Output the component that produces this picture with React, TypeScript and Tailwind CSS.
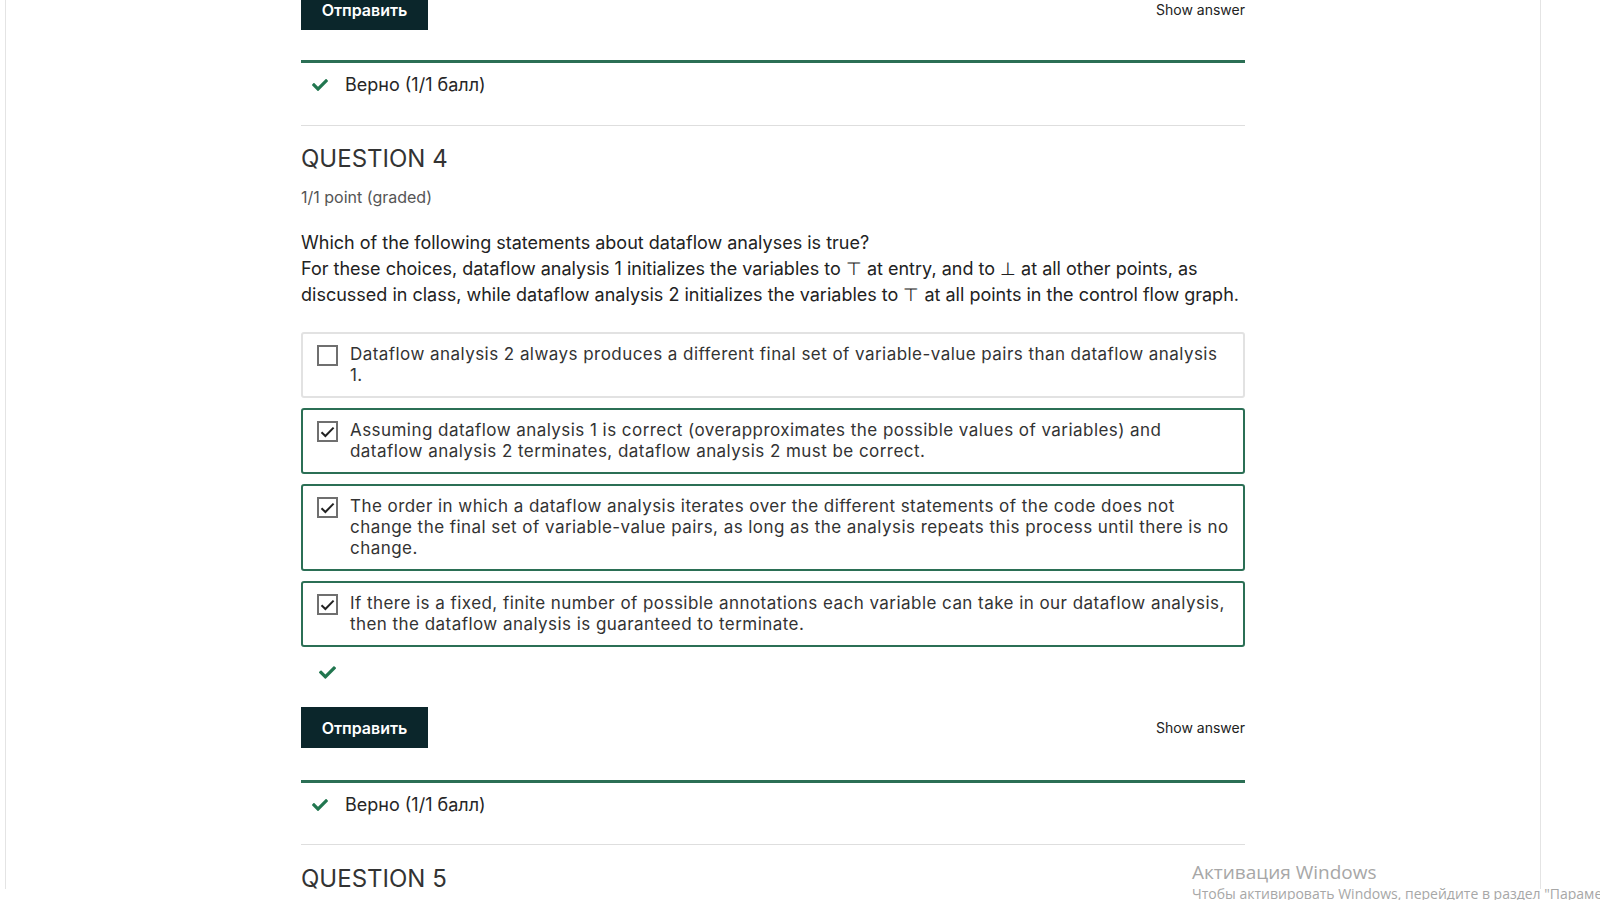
import { FaCheck } from "react-icons/fa";

type Choice = {
  text: string;
  checked: boolean;
};

const choices: Choice[] = [
  {
    text: "Dataflow analysis 2 always produces a different final set of variable-value pairs than dataflow analysis 1.",
    checked: false,
  },
  {
    text: "Assuming dataflow analysis 1 is correct (overapproximates the possible values of variables) and dataflow analysis 2 terminates, dataflow analysis 2 must be correct.",
    checked: true,
  },
  {
    text: "The order in which a dataflow analysis iterates over the different statements of the code does not change the final set of variable-value pairs, as long as the analysis repeats this process until there is no change.",
    checked: true,
  },
  {
    text: "If there is a fixed, finite number of possible annotations each variable can take in our dataflow analysis, then the dataflow analysis is guaranteed to terminate.",
    checked: true,
  },
];

const Checkbox = ({ checked }: { checked: boolean }) => (
  <span className="mt-[1px] flex h-[21px] w-[21px] shrink-0 items-center justify-center border-2 border-[#6f6f6f] bg-white">
    {checked && (
      <svg width="15" height="12" viewBox="0 0 15 12" fill="none">
        <path d="M1.5 6.2 L5.4 10 L13.6 1.6" stroke="#222" strokeWidth="2" />
      </svg>
    )}
  </span>
);

const SubmitRow = ({ className = "" }: { className?: string }) => (
  <div className={`flex items-center justify-between ${className}`}>
    <button className="h-[41px] w-[127px] bg-[#0b262b] text-[16px] font-semibold text-white">
      Отправить
    </button>
    <span className="text-[14px] text-[#222]">Show answer</span>
  </div>
);

const Verdict = () => (
  <div className="border-t-[3px] border-[#2b6f55]">
    <div className="flex items-center gap-[17px] pl-[11px] pt-[8px] text-[18px] text-[#262626]">
      <FaCheck className="text-[#21764f]" size={16} />
      <span>Верно (1/1 балл)</span>
    </div>
  </div>
);

const App = () => {
  return (
    <div className="relative h-[900px] w-[1600px] overflow-hidden bg-white font-['Inter',_'Liberation_Sans',_sans-serif]">
      <div className="ml-[5px] h-full w-[1536px] border-x border-[#e4e4e4]">
        <div className="-mt-[11px] ml-[295px] w-[944px]">
          <SubmitRow />

          <div className="mt-[30px]">
            <Verdict />
          </div>

          <div className="mt-[27px] border-t border-[#dedede]" />

          <h2 className="mt-[18px] text-[24px] leading-[30px] text-[#333]">QUESTION 4</h2>
          <p className="mt-[12px] text-[16px] leading-[22px] text-[#555]">1/1 point (graded)</p>

          <div className="mt-[22px] text-[18px] leading-[26px] text-[#222]">
            <p>Which of the following statements about dataflow analyses is true?</p>
            <p>
              For these choices, dataflow analysis 1 initializes the variables to ⊤ at entry, and to ⊥ at all other
              points, as discussed in class, while dataflow analysis 2 initializes the variables to ⊤ at all points in
              the control flow graph.
            </p>
          </div>

          <div className="mt-[24px] flex flex-col gap-[10px]">
            {choices.map((c, i) => (
              <label
                key={i}
                className={`flex gap-[12px] rounded-[3px] border-2 px-[14px] py-[10px] ${
                  c.checked ? "border-[#2b6f55]" : "border-[#e2e2e2]"
                }`}
              >
                <Checkbox checked={c.checked} />
                <span className="text-[17px] leading-[21px] tracking-[0.45px] text-[#333]">{c.text}</span>
              </label>
            ))}
          </div>

          <div className="ml-[18px] mt-[17px] h-[16px]">
            <FaCheck className="text-[#21764f]" size={17} />
          </div>

          <SubmitRow className="mt-[27px]" />

          <div className="mt-[32px]">
            <Verdict />
          </div>

          <div className="mt-[26px] border-t border-[#dedede]" />

          <h2 className="mt-[19px] text-[24px] leading-[30px] text-[#333]">QUESTION 5</h2>
        </div>
      </div>

      <div className="absolute left-[1192px] top-[859px] font-['Open_Sans',_'Liberation_Sans',_sans-serif] text-[#a7a7a7]">
        <div className="text-[19px] leading-[26px]">Активация Windows</div>
        <div className="whitespace-nowrap text-[14px] leading-[18px]">
          Чтобы активировать Windows, перейдите в раздел "Параметры".
        </div>
      </div>
    </div>
  );
};

export default App;
